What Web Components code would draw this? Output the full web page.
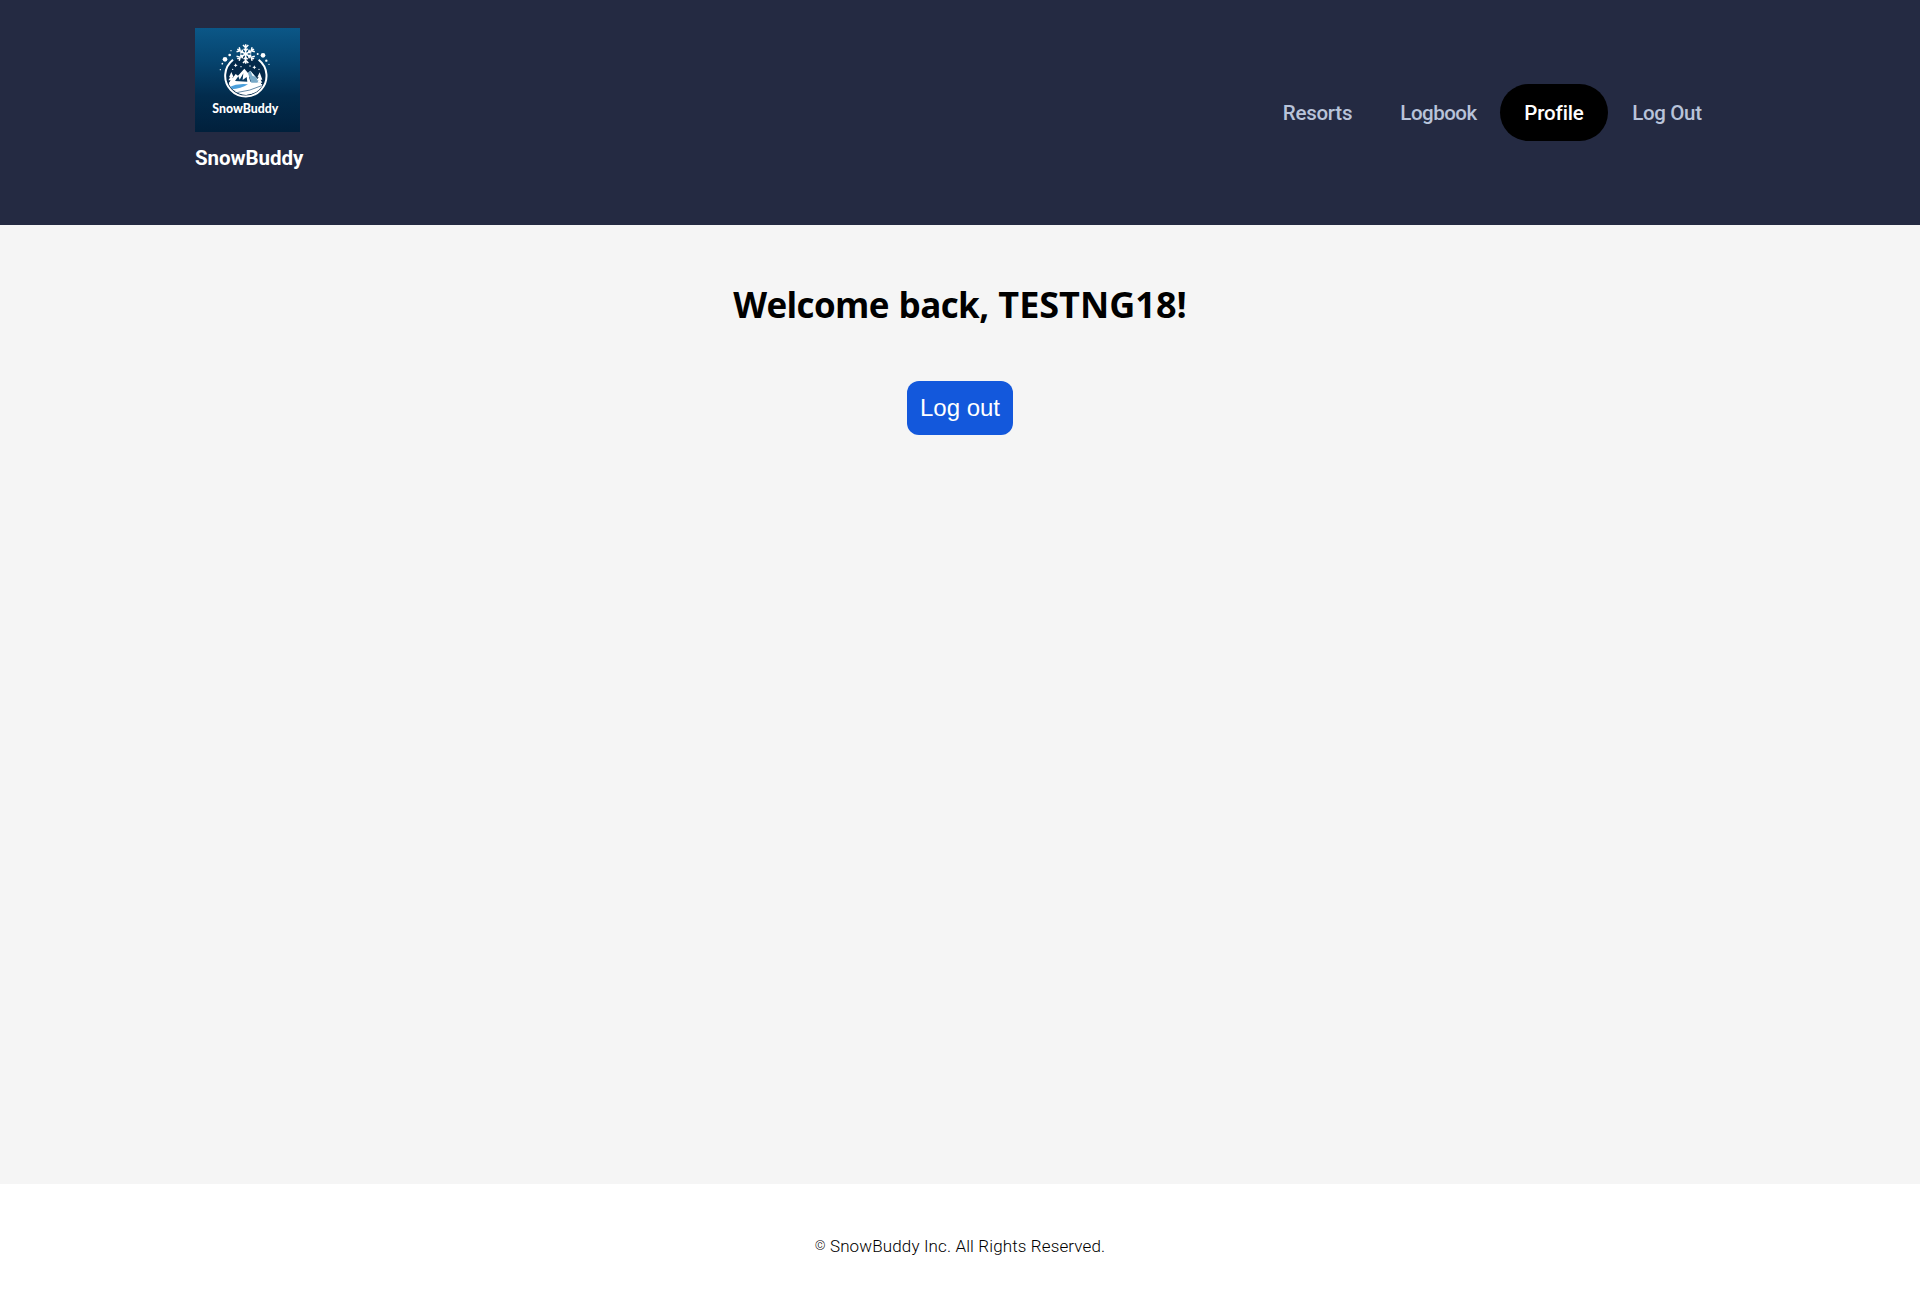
<!DOCTYPE html>
<html lang="en">
<head>
<meta charset="utf-8">
<title>SnowBuddy</title>
<style>
html, body { margin: 0; height: 100%; background: #fff; font-family: "Roboto", "Liberation Sans", sans-serif; }
</style>
</head>
<body>
<snow-app></snow-app>
<script>
const define = (name, html) => customElements.define(name, class extends HTMLElement {
  constructor() {
    super();
    this.attachShadow({ mode: 'open' }).innerHTML = html;
  }
});

define('snow-logo', `
<style>
  :host { display: block; width: 105px; height: 104px; }
  svg { display: block; width: 100%; height: 100%; }
</style>
<svg viewBox="15 23 315 312" preserveAspectRatio="none" aria-label="SnowBuddy logo">
  <defs>
    <linearGradient id="bg" x1="0" y1="0" x2="0" y2="1">
      <stop offset="0" stop-color="#0b5787"/><stop offset=".3" stop-color="#064570"/>
      <stop offset=".65" stop-color="#022c4d"/><stop offset="1" stop-color="#01203c"/>
    </linearGradient>
    <clipPath id="disc"><circle cx="168" cy="168" r="56"/></clipPath>
    <g id="arm"><path d="M0 0V-29M-8 -27L0 -19L8 -27M-6 -16L0 -10L6 -16"/></g>
  </defs>
  <rect x="15" y="23" width="315" height="312" fill="url(#bg)"/>
  <circle cx="168" cy="168" r="59" fill="#04294a"/>
  <g clip-path="url(#disc)">
    <path d="M119 186L137 161L144 166L163 145L174 158L181 151L213 188L180 198H112Z" fill="#fff"/>
    <path d="M135 182L145 168L149 178L160 159L158 179L170 170L172 184ZM177 170L184 163L192 182L181 184Z" fill="#0b3c62"/>
    <path d="M174 159L184 187H211L181 151Z" fill="#78a9c7"/>
    <path d="M181 151L195 169L187 166Z" fill="#fff"/>
    <path d="M110 194Q142 181 171 190L213 187V199Q170 220 126 210Z" fill="#fff"/>
    <path d="M116 201Q143 188 174 192Q153 205 124 207Z" fill="#4ba0dc"/>
    <path d="M128 211Q177 208 216 190L219 203Q193 224 157 225Z" fill="#fff"/>
    <path d="M139 217Q181 212 215 196" fill="none" stroke="#164d78" stroke-width="2"/>
    <path d="M124 155L117 171H121L115 180H122L117 188H132L127 180H132L127 171H131ZM209 156L202 171H206L200 180H206L202 187H217L212 178H217Z" fill="#fff"/>
  </g>
  <path d="M129 118A62 62 0 1 0 206 118" fill="none" stroke="#fff" stroke-width="6"/>
  <g transform="translate(167 101)" fill="none" stroke="#fff" stroke-width="4.5">
    <use href="#arm"/><use href="#arm" transform="rotate(60)"/><use href="#arm" transform="rotate(120)"/>
    <use href="#arm" transform="rotate(180)"/><use href="#arm" transform="rotate(240)"/><use href="#arm" transform="rotate(300)"/>
  </g>
  <g fill="#fff">
    <circle cx="105" cy="117" r="7"/><circle cx="219" cy="105" r="7"/><circle cx="119" cy="104" r="4"/>
    <circle cx="203" cy="101" r="3"/><circle cx="97" cy="130" r="2.5"/><circle cx="91" cy="148" r="2"/>
    <circle cx="123" cy="91" r="2"/><circle cx="229" cy="121" r="3.5"/><circle cx="237" cy="132" r="2"/>
    <path d="M137 129L139 133L143 135L139 137L137 141L135 137L131 135L135 133ZM193 135L195 139L199 141L195 143L193 147L191 143L187 141L191 139Z"/>
    <circle cx="153" cy="139" r="2"/><circle cx="180" cy="137" r="2"/><circle cx="128" cy="147" r="2"/><circle cx="207" cy="147" r="2"/>
    <text x="67" y="277" font-family="Lato, sans-serif" font-weight="900" font-size="38" textLength="198" lengthAdjust="spacingAndGlyphs">SnowBuddy</text>
  </g>
</svg>`);

define('nav-item', `
<style>
  :host { display: flex; align-items: center; justify-content: center; width: 119px; height: 57px;
    border-radius: 28.5px; color: #b8c3d9; font-weight: 500; font-size: 20.5px; white-space: nowrap; box-sizing: border-box; }
  :host([active]) { background: #000; color: #fff; }
</style>
<span><slot></slot></span>`);

define('snow-header', `
<style>
  :host { display: flex; justify-content: space-between; align-items: flex-start; box-sizing: border-box;
    height: 225px; padding: 28px 194px 0 195px; background: #242a42; }
  .name { margin-top: 13px; color: #fff; font-weight: 700; font-size: 20.5px; line-height: 26px; letter-spacing: -.05px; white-space: nowrap; }
  nav { display: flex; margin-top: 56px; }
</style>
<div><snow-logo></snow-logo><div class="name">SnowBuddy</div></div>
<nav>
  <nav-item style="letter-spacing:-.25px">Resorts</nav-item>
  <nav-item style="width:123px;letter-spacing:-.5px">Logbook</nav-item>
  <nav-item active style="width:108px;letter-spacing:-.15px">Profile</nav-item>
  <nav-item style="width:118px;letter-spacing:-.35px">Log Out</nav-item>
</nav>`);

define('snow-button', `
<style>
  :host { display: block; }
  button { display: block; width: 106px; height: 54px; padding: 0; border: 0; border-radius: 12px; background: #1358dc;
    color: #fff; font: 24px "Liberation Sans", sans-serif; }
</style>
<button><slot></slot></button>`);

define('snow-welcome', `
<style>
  :host { display: flex; flex-direction: column; align-items: center; flex: 1; background: #f5f5f5; }
  h1 { margin: 55px 0 51px; font: 700 36px/50px "Open Sans", sans-serif; color: #000; white-space: nowrap; }
  ::slotted(span) { font-size: 35px; letter-spacing: -.6px; word-spacing: 1.2px; }
</style>
<h1><slot></slot></h1>
<snow-button>Log out</snow-button>`);

define('snow-footer', `
<style>
  :host { display: flex; justify-content: center; box-sizing: border-box; height: 123px; padding-top: 49px; background: #fff; }
  p { margin: 0; color: #000; font-weight: 300; font-size: 17px; line-height: 26px; letter-spacing: .13px; white-space: nowrap; }
  ::slotted(span) { font-size: 13.5px; position: relative; top: -2px; }
</style>
<p><slot></slot></p>`);

define('snow-app', `
<style>:host { display: flex; flex-direction: column; height: 1307px; }</style>
<snow-header></snow-header>
<snow-welcome><span>Welcome back, </span>TESTNG18!</snow-welcome>
<snow-footer><span>©</span> SnowBuddy Inc. All Rights Reserved.</snow-footer>`);
</script>
</body>
</html>
